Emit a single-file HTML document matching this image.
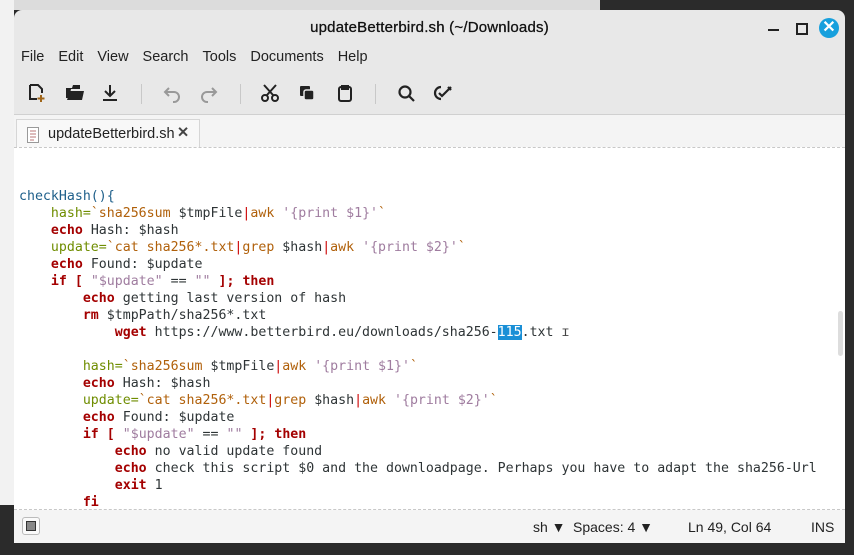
<!DOCTYPE html><html><head><style>
body{margin:0;width:854px;height:555px;overflow:hidden;background:#2b2b2b;position:relative;font-family:"Liberation Sans",sans-serif}
.bgtop{position:absolute;left:0;top:0;width:600px;height:10px;background:#dcdcdc}
.bgleft{position:absolute;left:0;top:0;width:14px;height:505px;background:#f2f2f2}
.win{position:absolute;left:14px;top:10px;width:831px;height:533px;background:#e8e8e8;border-radius:8px 8px 0 0;overflow:hidden}
.title{position:absolute;top:9px;width:100%;text-align:center;font-size:15px;color:#111;letter-spacing:0.2px;-webkit-text-stroke:0.3px #111}
.menu{position:absolute;top:39px;left:7px;font-size:14.5px;color:#222}
.menu span{margin-right:14px}
.ic{position:absolute;top:72px}
.sep{position:absolute;top:74px;width:1px;height:20px;background:#c8c8c8}
.tabbar{position:absolute;top:104px;left:0;width:100%;height:32px;background:#f4f4f4;border-top:1px solid #d0d0d0}
.tab{position:absolute;left:2px;top:4px;width:182px;height:30px;background:#f8f8f8;border:1px solid #d6d6d6;border-bottom:none;font-size:14.5px;color:#222}
.editor{position:absolute;top:137px;left:0;width:100%;height:361px;background:#fff;border-top:1px dashed #c8c8c8;border-bottom:1px dashed #c8c8c8}
pre{margin:0;position:absolute;left:5px;top:40px;font-family:"DejaVu Sans Mono",monospace;font-size:13.25px;line-height:17px;color:#2e3436}
.k{color:#a40000;font-weight:bold}.v{color:#6f8d00}.c{color:#b0600a}.s{color:#9f7c9f}.f{color:#1e5f8a}.p{color:#c00}.sel{background:#1a8fd6;color:#fff}
.status{position:absolute;top:500px;left:0;width:100%;height:33px;background:#f4f4f4;font-size:14px;color:#222}
.status span{position:absolute;top:9px;font-family:"Liberation Sans Narrow","Liberation Sans",sans-serif}
</style></head><body>
<div class="bgtop"></div><div class="bgleft"></div>
<div class="win">
<div class="title">updateBetterbird.sh (~/Downloads)</div>
<div style="position:absolute;left:754px;top:19px;width:11px;height:2px;background:#222"></div>
<div style="position:absolute;left:782px;top:13px;width:8px;height:8px;border:2px solid #222"></div>
<div style="position:absolute;left:805px;top:8px;width:20px;height:20px;border-radius:50%;background:#17a0dd;color:#fff;font-size:16px;font-weight:bold;text-align:center;line-height:20px">✕</div>
<div class="menu"><span>File</span><span>Edit</span><span>View</span><span>Search</span><span>Tools</span><span>Documents</span><span>Help</span></div>
<svg class="ic" style="left:12px" width="24" height="22" viewBox="0 0 24 22" fill="none" stroke="#222" stroke-width="2"><path d="M4 3h8l4 4v4M4 3v14h7"/><path d="M15 13v7M11.5 16.5h7" stroke="#a0661a"/></svg>
<svg class="ic" style="left:49px" width="24" height="22" viewBox="0 0 24 22"><path d="M3 6h6l1-3h7v4H8l-2 9H3z M7 9h14l-2 9H4z" fill="#222"/></svg>
<svg class="ic" style="left:85px" width="24" height="22" viewBox="0 0 24 22" fill="none" stroke="#222" stroke-width="2"><path d="M11 3v11M6 9l5 5 5-5M4 18h14"/></svg>
<div class="sep" style="left:127px"></div>
<svg class="ic" style="left:147px" width="24" height="22" viewBox="0 0 24 22" fill="none" stroke="#999" stroke-width="2"><path d="M8 6l-4 4 4 4M4 10h9a5 5 0 010 10h-1"/></svg>
<svg class="ic" style="left:183px" width="24" height="22" viewBox="0 0 24 22" fill="none" stroke="#999" stroke-width="2"><path d="M15 6l4 4-4 4M19 10h-9a5 5 0 000 10h1"/></svg>
<div class="sep" style="left:226px"></div>
<svg class="ic" style="left:245px" width="24" height="22" viewBox="0 0 24 22" fill="none" stroke="#222" stroke-width="2"><circle cx="6" cy="16" r="3"/><circle cx="16" cy="16" r="3"/><path d="M8 13L17 3M14 13L5 3"/></svg>
<svg class="ic" style="left:282px" width="24" height="22" viewBox="0 0 24 22"><rect x="4" y="4" width="10" height="10" rx="1" fill="#222"/><rect x="8" y="8" width="10" height="10" rx="2" fill="#222" stroke="#e8e8e8" stroke-width="1.5"/></svg>
<svg class="ic" style="left:319px" width="24" height="22" viewBox="0 0 24 22" fill="none" stroke="#222" stroke-width="2"><rect x="6" y="5" width="12" height="14" rx="2"/><path d="M9 4h6v3H9z" fill="#222"/></svg>
<div class="sep" style="left:361px"></div>
<svg class="ic" style="left:381px" width="24" height="22" viewBox="0 0 24 22" fill="none" stroke="#222" stroke-width="2.2"><circle cx="10" cy="10" r="5.5"/><path d="M14 14l5 5"/></svg>
<svg class="ic" style="left:418px" width="24" height="22" viewBox="0 0 24 22" fill="none" stroke="#222" stroke-width="2.2"><path d="M9 5a6 6 0 100 12M7 11l3 3 9-9M16 5l3 3"/></svg>
<div class="tabbar"><div class="tab">
<svg style="position:absolute;left:10px;top:7px" width="12" height="16"><rect x="0.5" y="0.5" width="11" height="15" fill="#fff" stroke="#999"/><path d="M3 4h6M3 7h6M3 10h6M3 13h4" stroke="#b77"/></svg>
<span style="position:absolute;left:31px;top:6px">updateBetterbird.sh</span><span style="position:absolute;left:160px;top:5px;font-weight:bold;color:#444">✕</span></div></div>
<div class="editor">
<div style="position:absolute;right:2px;top:163px;width:5px;height:45px;background:#ddd;border-radius:3px"></div>
<pre><span class="f">checkHash(){</span>
    <span class="v">hash=</span><span class="c">`sha256sum</span> $tmpFile<span class="p">|</span><span class="c">awk</span> <span class="s">'{print $1}'</span><span class="c">`</span>
    <span class="k">echo</span> Hash: $hash
    <span class="v">update=</span><span class="c">`cat sha256*.txt</span><span class="p">|</span><span class="c">grep</span> $hash<span class="p">|</span><span class="c">awk</span> <span class="s">'{print $2}'</span><span class="c">`</span>
    <span class="k">echo</span> Found: $update
    <span class="k">if</span> <span class="k">[</span> <span class="s">"$update"</span> == <span class="s">""</span> <span class="k">]; then</span>
        <span class="k">echo</span> getting last version of hash
        <span class="k">rm</span> $tmpPath/sha256*.txt
            <span class="k">wget</span> https://www.betterbird.eu/downloads/sha256-<span class="sel">115</span>.txt <span style="color:#444">ɪ</span>

        <span class="v">hash=</span><span class="c">`sha256sum</span> $tmpFile<span class="p">|</span><span class="c">awk</span> <span class="s">'{print $1}'</span><span class="c">`</span>
        <span class="k">echo</span> Hash: $hash
        <span class="v">update=</span><span class="c">`cat sha256*.txt</span><span class="p">|</span><span class="c">grep</span> $hash<span class="p">|</span><span class="c">awk</span> <span class="s">'{print $2}'</span><span class="c">`</span>
        <span class="k">echo</span> Found: $update
        <span class="k">if</span> <span class="k">[</span> <span class="s">"$update"</span> == <span class="s">""</span> <span class="k">]; then</span>
            <span class="k">echo</span> no valid update found
            <span class="k">echo</span> check this script $0 and the downloadpage. Perhaps you have to adapt the sha256-Url
            <span class="k">exit</span> 1
        <span class="k">fi</span></pre>
</div>
<div class="status">
<div style="position:absolute;left:8px;top:7px;width:16px;height:16px;border:1px solid #bbb;border-radius:3px;background:#fafafa"><div style="position:absolute;left:3px;top:3px;width:8px;height:8px;border:1px solid #333;background:#888"></div></div>
<span style="left:519px">sh ▼</span><span style="left:559px">Spaces: 4 ▼</span><span style="left:674px">Ln 49, Col 64</span><span style="left:797px">INS</span>
</div>
</div>
</body></html>
